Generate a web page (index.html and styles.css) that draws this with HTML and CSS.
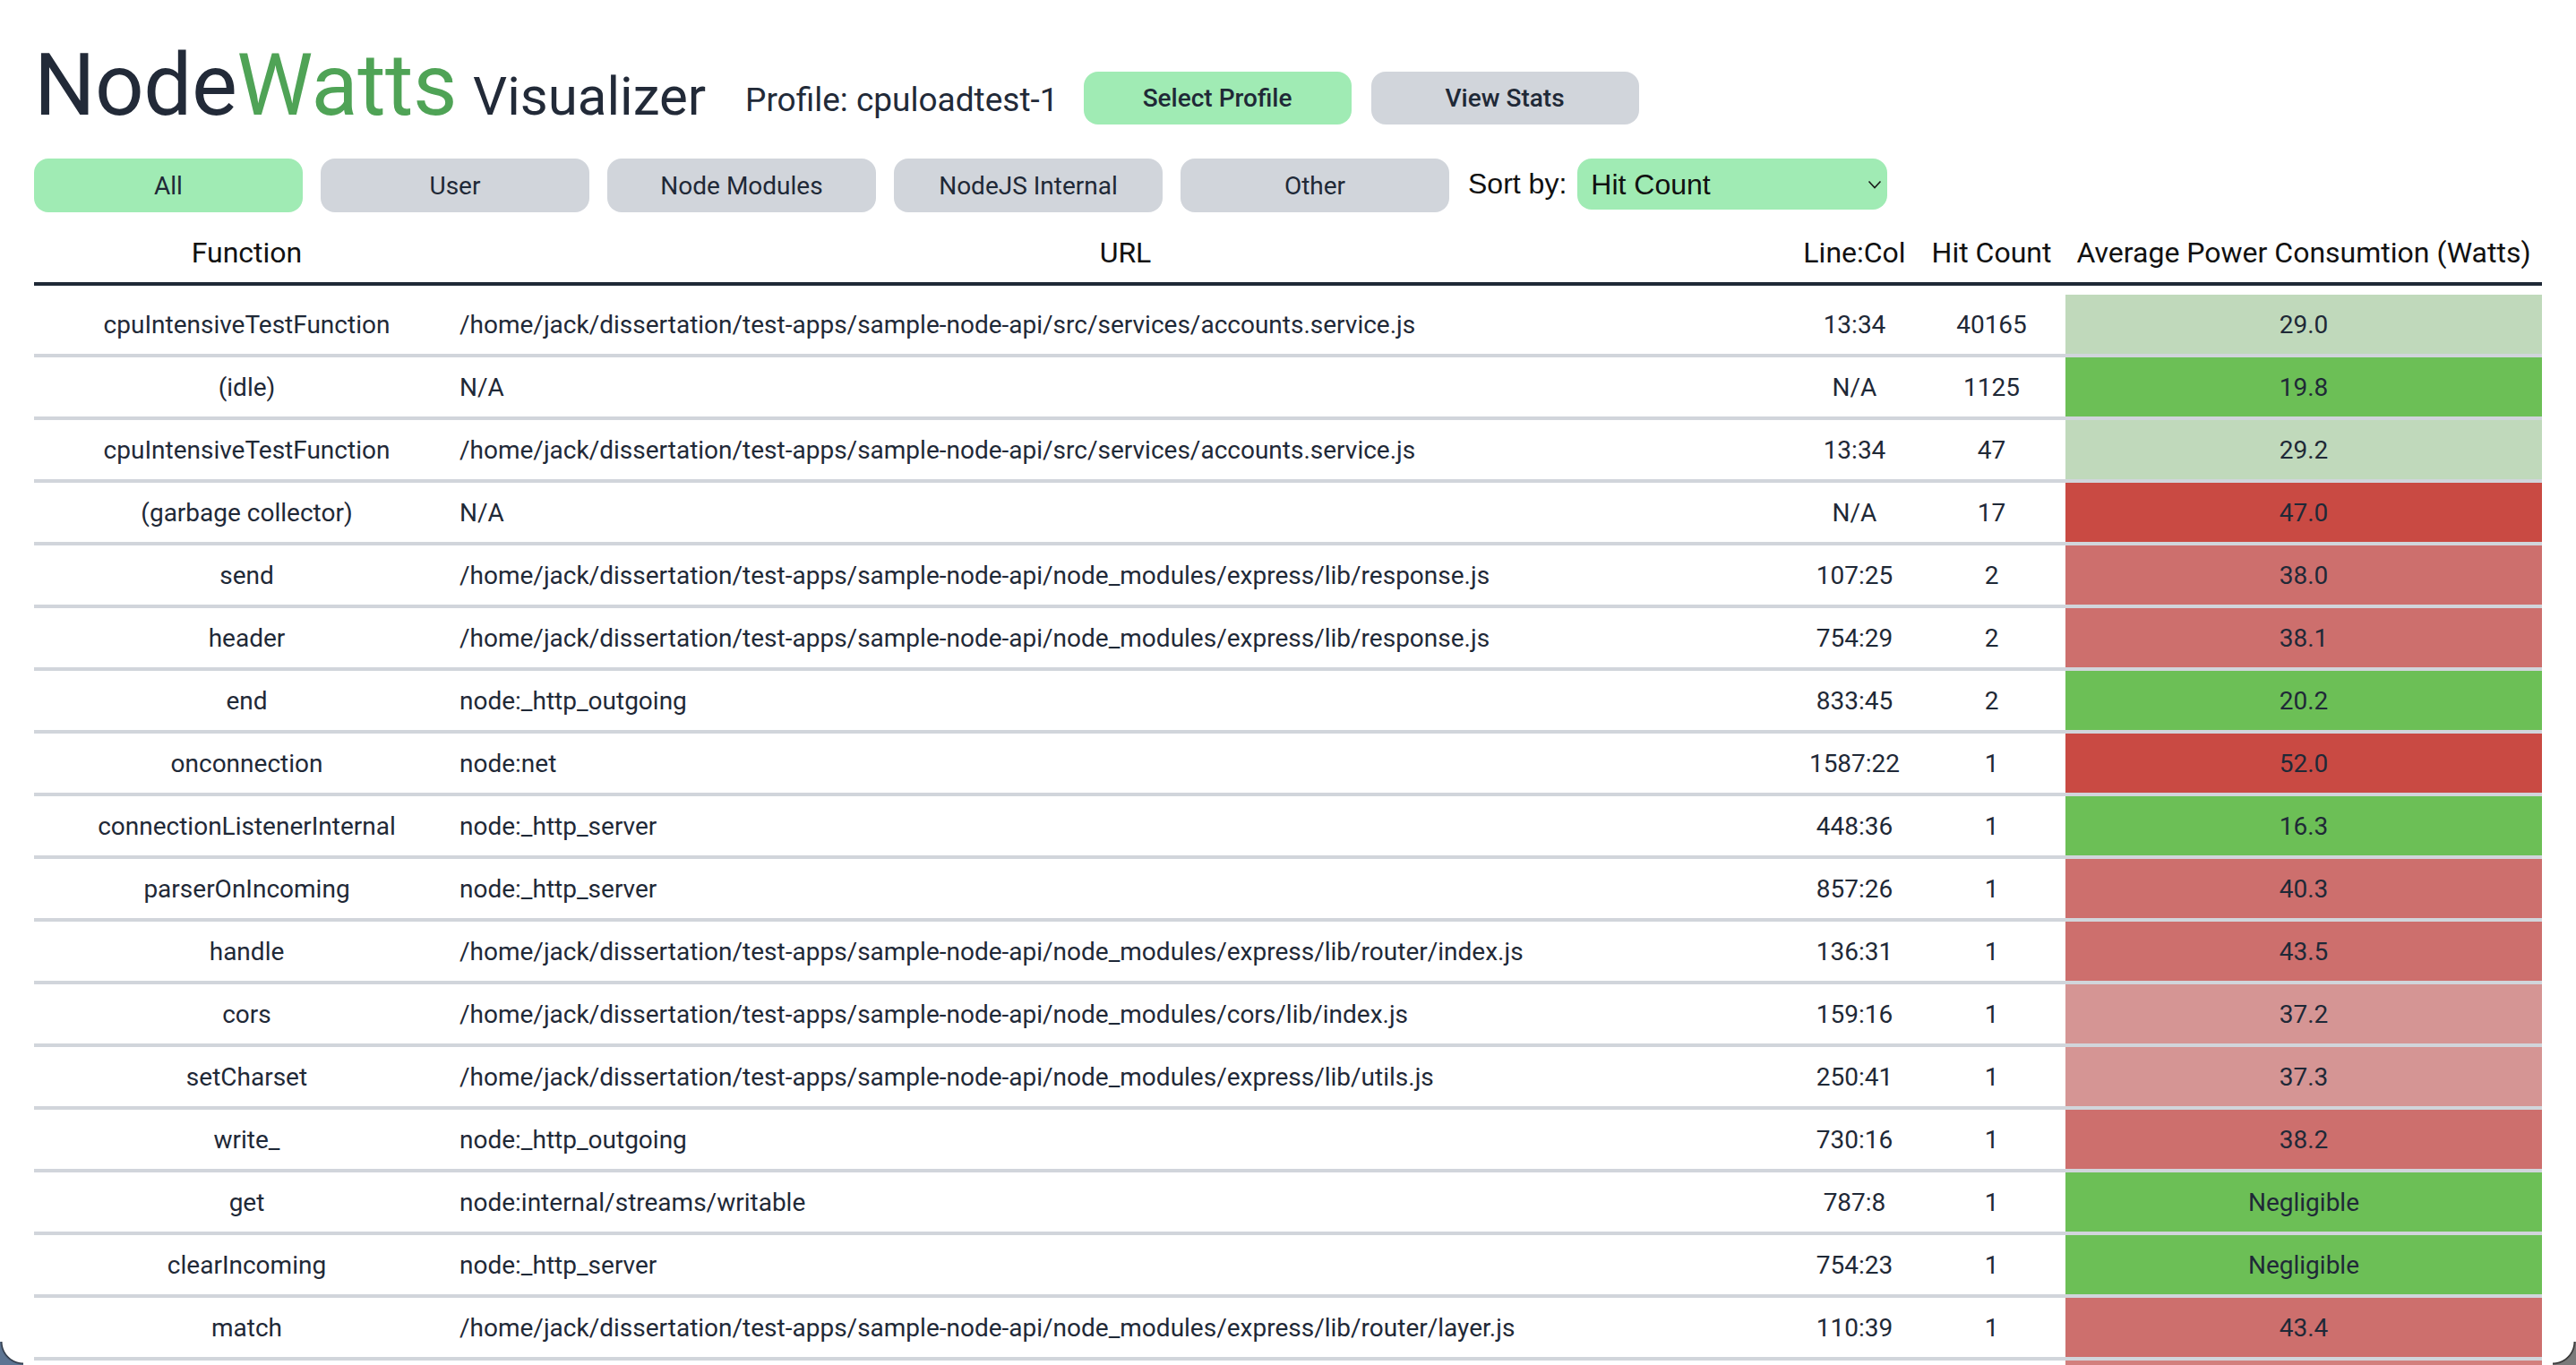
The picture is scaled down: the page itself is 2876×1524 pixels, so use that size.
FILE: index.html
```html
<!DOCTYPE html>
<html lang="en">
<head>
<meta charset="utf-8">
<title>NodeWatts Visualizer</title>
<link rel="stylesheet" href="styles.css">
</head>
<body>
<div class="page">
  <header class="top">
    <div class="title">
      <h1 class="brand"><span class="node">Node</span><span class="watts">Watts</span></h1>
      <span class="sub">Visualizer</span>
    </div>
    <div class="profile-group">
      <span class="profile">Profile: cpuloadtest-1</span>
      <button class="btn btn-green btn-medium">Select Profile</button>
      <button class="btn btn-gray btn-medium">View Stats</button>
    </div>
  </header>

  <div class="filters">
    <button class="btn btn-green">All</button>
    <button class="btn btn-gray">User</button>
    <button class="btn btn-gray">Node Modules</button>
    <button class="btn btn-gray">NodeJS Internal</button>
    <button class="btn btn-gray">Other</button>
    <label class="sort-label" for="sort">Sort by:</label>
    <div class="select-wrap">
      <select id="sort" class="sort-select">
        <option>Hit Count</option>
        <option>Power</option>
      </select>
      <svg class="chevron" width="16" height="10" viewBox="0 0 16 10"><path d="M1.5 1.5 L8 8.5 L14.5 1.5" fill="none" stroke="#1a1a1a" stroke-width="1.6"/></svg>
    </div>
  </div>

  <div class="table">
    <div class="grid thead">
      <div class="th">Function</div>
      <div class="th">URL</div>
      <div class="th">Line:Col</div>
      <div class="th">Hit Count</div>
      <div class="th">Average Power Consumtion (Watts)</div>
    </div>
    <div class="tbody">
      <div class="grid tr"><div class="td fn">cpuIntensiveTestFunction</div><div class="td url">/home/jack/dissertation/test-apps/sample-node-api/src/services/accounts.service.js</div><div class="td num">13:34</div><div class="td num">40165</div><div class="td pw pw-light">29.0</div></div>
      <div class="grid tr"><div class="td fn">(idle)</div><div class="td url">N/A</div><div class="td num">N/A</div><div class="td num">1125</div><div class="td pw pw-green">19.8</div></div>
      <div class="grid tr"><div class="td fn">cpuIntensiveTestFunction</div><div class="td url">/home/jack/dissertation/test-apps/sample-node-api/src/services/accounts.service.js</div><div class="td num">13:34</div><div class="td num">47</div><div class="td pw pw-light">29.2</div></div>
      <div class="grid tr"><div class="td fn">(garbage collector)</div><div class="td url">N/A</div><div class="td num">N/A</div><div class="td num">17</div><div class="td pw pw-red">47.0</div></div>
      <div class="grid tr"><div class="td fn">send</div><div class="td url">/home/jack/dissertation/test-apps/sample-node-api/node_modules/express/lib/response.js</div><div class="td num">107:25</div><div class="td num">2</div><div class="td pw pw-salmon">38.0</div></div>
      <div class="grid tr"><div class="td fn">header</div><div class="td url">/home/jack/dissertation/test-apps/sample-node-api/node_modules/express/lib/response.js</div><div class="td num">754:29</div><div class="td num">2</div><div class="td pw pw-salmon">38.1</div></div>
      <div class="grid tr"><div class="td fn">end</div><div class="td url">node:_http_outgoing</div><div class="td num">833:45</div><div class="td num">2</div><div class="td pw pw-green">20.2</div></div>
      <div class="grid tr"><div class="td fn">onconnection</div><div class="td url">node:net</div><div class="td num">1587:22</div><div class="td num">1</div><div class="td pw pw-red">52.0</div></div>
      <div class="grid tr"><div class="td fn">connectionListenerInternal</div><div class="td url">node:_http_server</div><div class="td num">448:36</div><div class="td num">1</div><div class="td pw pw-green">16.3</div></div>
      <div class="grid tr"><div class="td fn">parserOnIncoming</div><div class="td url">node:_http_server</div><div class="td num">857:26</div><div class="td num">1</div><div class="td pw pw-salmon">40.3</div></div>
      <div class="grid tr"><div class="td fn">handle</div><div class="td url">/home/jack/dissertation/test-apps/sample-node-api/node_modules/express/lib/router/index.js</div><div class="td num">136:31</div><div class="td num">1</div><div class="td pw pw-salmon">43.5</div></div>
      <div class="grid tr"><div class="td fn">cors</div><div class="td url">/home/jack/dissertation/test-apps/sample-node-api/node_modules/cors/lib/index.js</div><div class="td num">159:16</div><div class="td num">1</div><div class="td pw pw-pink">37.2</div></div>
      <div class="grid tr"><div class="td fn">setCharset</div><div class="td url">/home/jack/dissertation/test-apps/sample-node-api/node_modules/express/lib/utils.js</div><div class="td num">250:41</div><div class="td num">1</div><div class="td pw pw-pink">37.3</div></div>
      <div class="grid tr"><div class="td fn">write_</div><div class="td url">node:_http_outgoing</div><div class="td num">730:16</div><div class="td num">1</div><div class="td pw pw-salmon">38.2</div></div>
      <div class="grid tr"><div class="td fn">get</div><div class="td url">node:internal/streams/writable</div><div class="td num">787:8</div><div class="td num">1</div><div class="td pw pw-green">Negligible</div></div>
      <div class="grid tr"><div class="td fn">clearIncoming</div><div class="td url">node:_http_server</div><div class="td num">754:23</div><div class="td num">1</div><div class="td pw pw-green">Negligible</div></div>
      <div class="grid tr"><div class="td fn">match</div><div class="td url">/home/jack/dissertation/test-apps/sample-node-api/node_modules/express/lib/router/layer.js</div><div class="td num">110:39</div><div class="td num">1</div><div class="td pw pw-salmon">43.4</div></div>
      <div class="grid tr"><div class="td fn"></div><div class="td url"></div><div class="td num"></div><div class="td num"></div><div class="td pw pw-rose"></div></div>
    </div>
  </div>
</div>
<div class="corner corner-left"></div>
<div class="corner corner-right"></div>
</body>
</html>
```

FILE: styles.css
```css
html, body {
  margin: 0;
  padding: 0;
  background: #ffffff;
}

body {
  font-family: Roboto, "Noto Sans", sans-serif;
  font-size: 28px;
  color: #1f2937;
}

.page {
  padding: 47px 38px 0;
}

.top {
  display: flex;
  align-items: flex-end;
}

.title {
  display: flex;
  align-items: baseline;
}

.brand {
  margin: 0;
  font-family: Roboto, "Liberation Sans", sans-serif;
  font-weight: 400;
  font-size: 96px;
  line-height: 96px;
  color: #222a38;
  letter-spacing: -0.5px;
}

.watts {
  color: #4fa356;
}

.sub {
  margin-left: 18px;
  font-size: 60px;
  line-height: 60px;
  color: #222a38;
}

.profile-group {
  display: flex;
  align-items: center;
  gap: 22px;
  margin-left: 44px;
  margin-bottom: 4px;
  height: 59px;
}

.profile {
  font-size: 37px;
  line-height: 44px;
  padding-top: 4px;
  margin-right: 6px;
  color: #222a38;
}

.btn {
  border: none;
  margin: 0;
  padding: 0;
  width: 300px;
  height: 60px;
  border-radius: 16px;
  font-family: Roboto, "Noto Sans", sans-serif;
  font-size: 28px;
  color: #1f2937;
  cursor: pointer;
}

.btn-medium {
  width: 299px;
  height: 59px;
  font-weight: 500;
}

.btn-green {
  background: #a0ebb4;
}

.btn-gray {
  background: #d1d5db;
}

.filters {
  display: flex;
  align-items: flex-start;
  gap: 20px;
  margin-top: 34px;
}

.sort-label {
  font-family: "Liberation Sans", Arial, sans-serif;
  font-size: 32px;
  line-height: 57px;
  color: #111111;
  margin-left: 1px;
  margin-right: -8px;
}

.select-wrap {
  position: relative;
  width: 346px;
  height: 57px;
}

.sort-select {
  appearance: none;
  -webkit-appearance: none;
  width: 346px;
  height: 57px;
  border: none;
  border-radius: 16px;
  background: #a0ebb4;
  padding: 0 40px 0 15px;
  font-family: "Liberation Sans", Arial, sans-serif;
  font-size: 32px;
  color: #111111;
}

.chevron {
  position: absolute;
  right: 6px;
  top: 24px;
  pointer-events: none;
}

.table {
  margin-top: 12px;
}

.grid {
  display: grid;
  grid-template-columns: 475px 1487px 141px 165px 532px;
}

.thead {
  height: 66px;
  border-bottom: 4px solid #1f2937;
  color: #111111;
  font-size: 32px;
}

.th {
  display: flex;
  align-items: center;
  justify-content: center;
  white-space: nowrap;
}

.tbody {
  padding-top: 10px;
}

.tr {
  height: 66px;
  border-bottom: 4px solid #d1d5db;
}

.td {
  display: flex;
  align-items: center;
  white-space: nowrap;
}

.fn, .num, .pw {
  justify-content: center;
}

.url {
  justify-content: flex-start;
}

.pw-light { background: #c0d9bb; }
.pw-green { background: #6cbf56; }
.pw-red { background: #c94a43; }
.pw-salmon { background: #cd6f6d; }
.pw-pink { background: #d59594; }
.pw-rose { background: #d27f7d; }

.corner {
  position: fixed;
  bottom: 0;
  width: 26px;
  height: 26px;
  pointer-events: none;
}

.corner-left {
  left: 0;
  background: radial-gradient(circle at 100% 0, transparent 23px, #2a3340 24px, #5d7593 26px);
}

.corner-right {
  right: 0;
  background: radial-gradient(circle at 0 0, transparent 23px, #2a2a2a 24px, #7a7a7a 26px);
}
```
